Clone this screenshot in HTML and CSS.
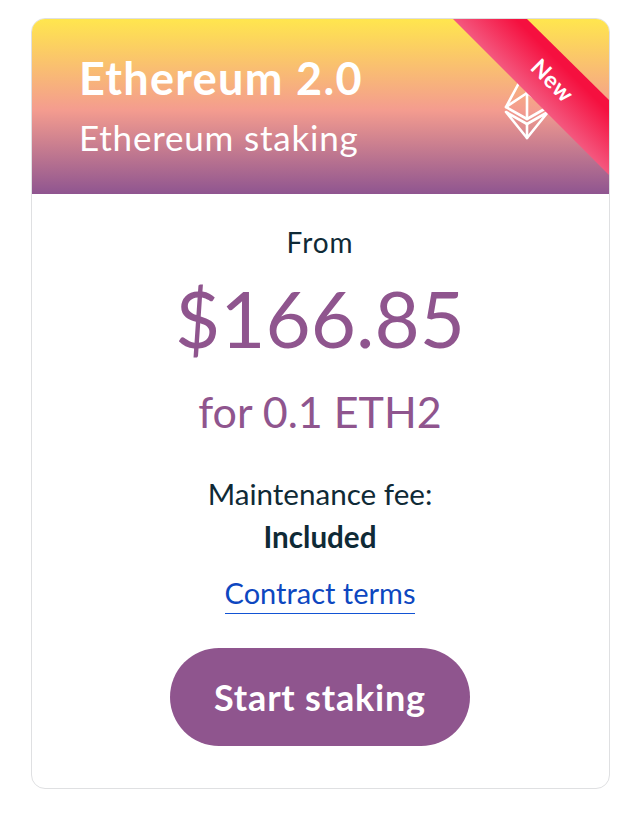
FILE: index.html
```html
<!DOCTYPE html>
<html lang="en">
<head>
<meta charset="utf-8">
<title>Ethereum 2.0</title>
<link rel="stylesheet" href="styles.css">
</head>
<body>
<article class="card">
  <header class="head">
    <h1 class="title">Ethereum 2.0</h1>
    <p class="subtitle">Ethereum staking</p>
    <svg class="eth" viewBox="0 0 46 74" aria-hidden="true">
      <g fill="none" stroke="#fff" stroke-width="2.6" stroke-linejoin="round" stroke-linecap="round">
        <path d="M23 2 L2 41 L23 53 L44 41 Z"/>
        <path d="M23 2 V53"/>
        <path d="M2 41 L23 27 L44 41"/>
        <path d="M2 46 L23 72 L44 46 L23 58 Z"/>
        <path d="M23 58 V72"/>
      </g>
    </svg>
    <div class="ribbon"><span class="ribbon-text">New</span></div>
  </header>
  <section class="body">
    <p class="from">From</p>
    <p class="price">$166.85</p>
    <p class="amount">for 0.1 ETH2</p>
    <p class="fee">Maintenance fee:<br><strong>Included</strong></p>
    <a class="terms" href="#">Contract terms</a>
    <button class="cta" type="button">Start staking</button>
  </section>
</article>
</body>
</html>
```

FILE: styles.css
```css
* { box-sizing: border-box; }
html, body { margin: 0; background: #fff; }
body { padding: 18px 30px 35px 31px; font-family: Lato, "Open Sans", sans-serif; color: #0f2a36; }
.card {
  width: 579px;
  height: 771px;
  border: 1px solid #dfe0e2;
  border-radius: 14px;
  overflow: hidden;
  background: #fff;
}
.head {
  position: relative;
  height: 175px;
  padding: 32px 0 0 47px;
  color: #fff;
  overflow: hidden;
  background: linear-gradient(180deg, #ffe64e 0%, #f49c8f 52%, #8f5590 100%);
}
.title { margin: 0; font-size: 45px; line-height: 54px; font-weight: 700; letter-spacing: 1.3px; }
.subtitle { margin: 10px 0 0; font-size: 35px; line-height: 44px; font-weight: 400; letter-spacing: 0.8px; }
.eth { position: absolute; left: 472px; top: 47px; width: 46px; height: 74px; }
.ribbon {
  position: absolute;
  left: 421px;
  top: 0;
  width: 157px;
  height: 157px;
  clip-path: polygon(0 0, 74px 0, 157px 82px, 157px 157px);
  background: linear-gradient(45deg, #f4587f 50%, #f5103f 70%);
}
.ribbon-text {
  position: absolute;
  left: 98px;
  top: 48px;
  width: 64px;
  text-align: center;
  transform: translate(-30px, 0) rotate(45deg);
  font-size: 23px;
  line-height: 26px;
  font-weight: 700;
  letter-spacing: 0.5px;
  color: #fff;
}
.body { display: flex; flex-direction: column; align-items: center; padding-right: 1px; }
.body p { margin: 0; }
.from { margin-top: 31px !important; font-size: 28px; line-height: 34px; letter-spacing: 0.9px; }
.price { margin-top: 11px !important; font-size: 78px; line-height: 96px; color: #8f558e; }
.amount { margin-top: 17px !important; font-size: 43px; line-height: 58px; color: #8f558e; }
.fee { margin-top: 31px !important; font-size: 29.6px; line-height: 43px; text-align: center; }
.fee strong { font-weight: 700; }
.terms {
  margin-top: 15px;
  font-size: 29px;
  line-height: 40px;
  color: #0d47c0;
  text-decoration: none;
  border-bottom: 1px solid #1254d4;
}
.cta {
  margin-top: 34px;
  width: 300px;
  height: 98px;
  border: 0;
  border-radius: 49px;
  background: #8f558e;
  color: #fff;
  font: 700 36px/1 Lato, "Open Sans", sans-serif;
  letter-spacing: 0.8px;
}
```
